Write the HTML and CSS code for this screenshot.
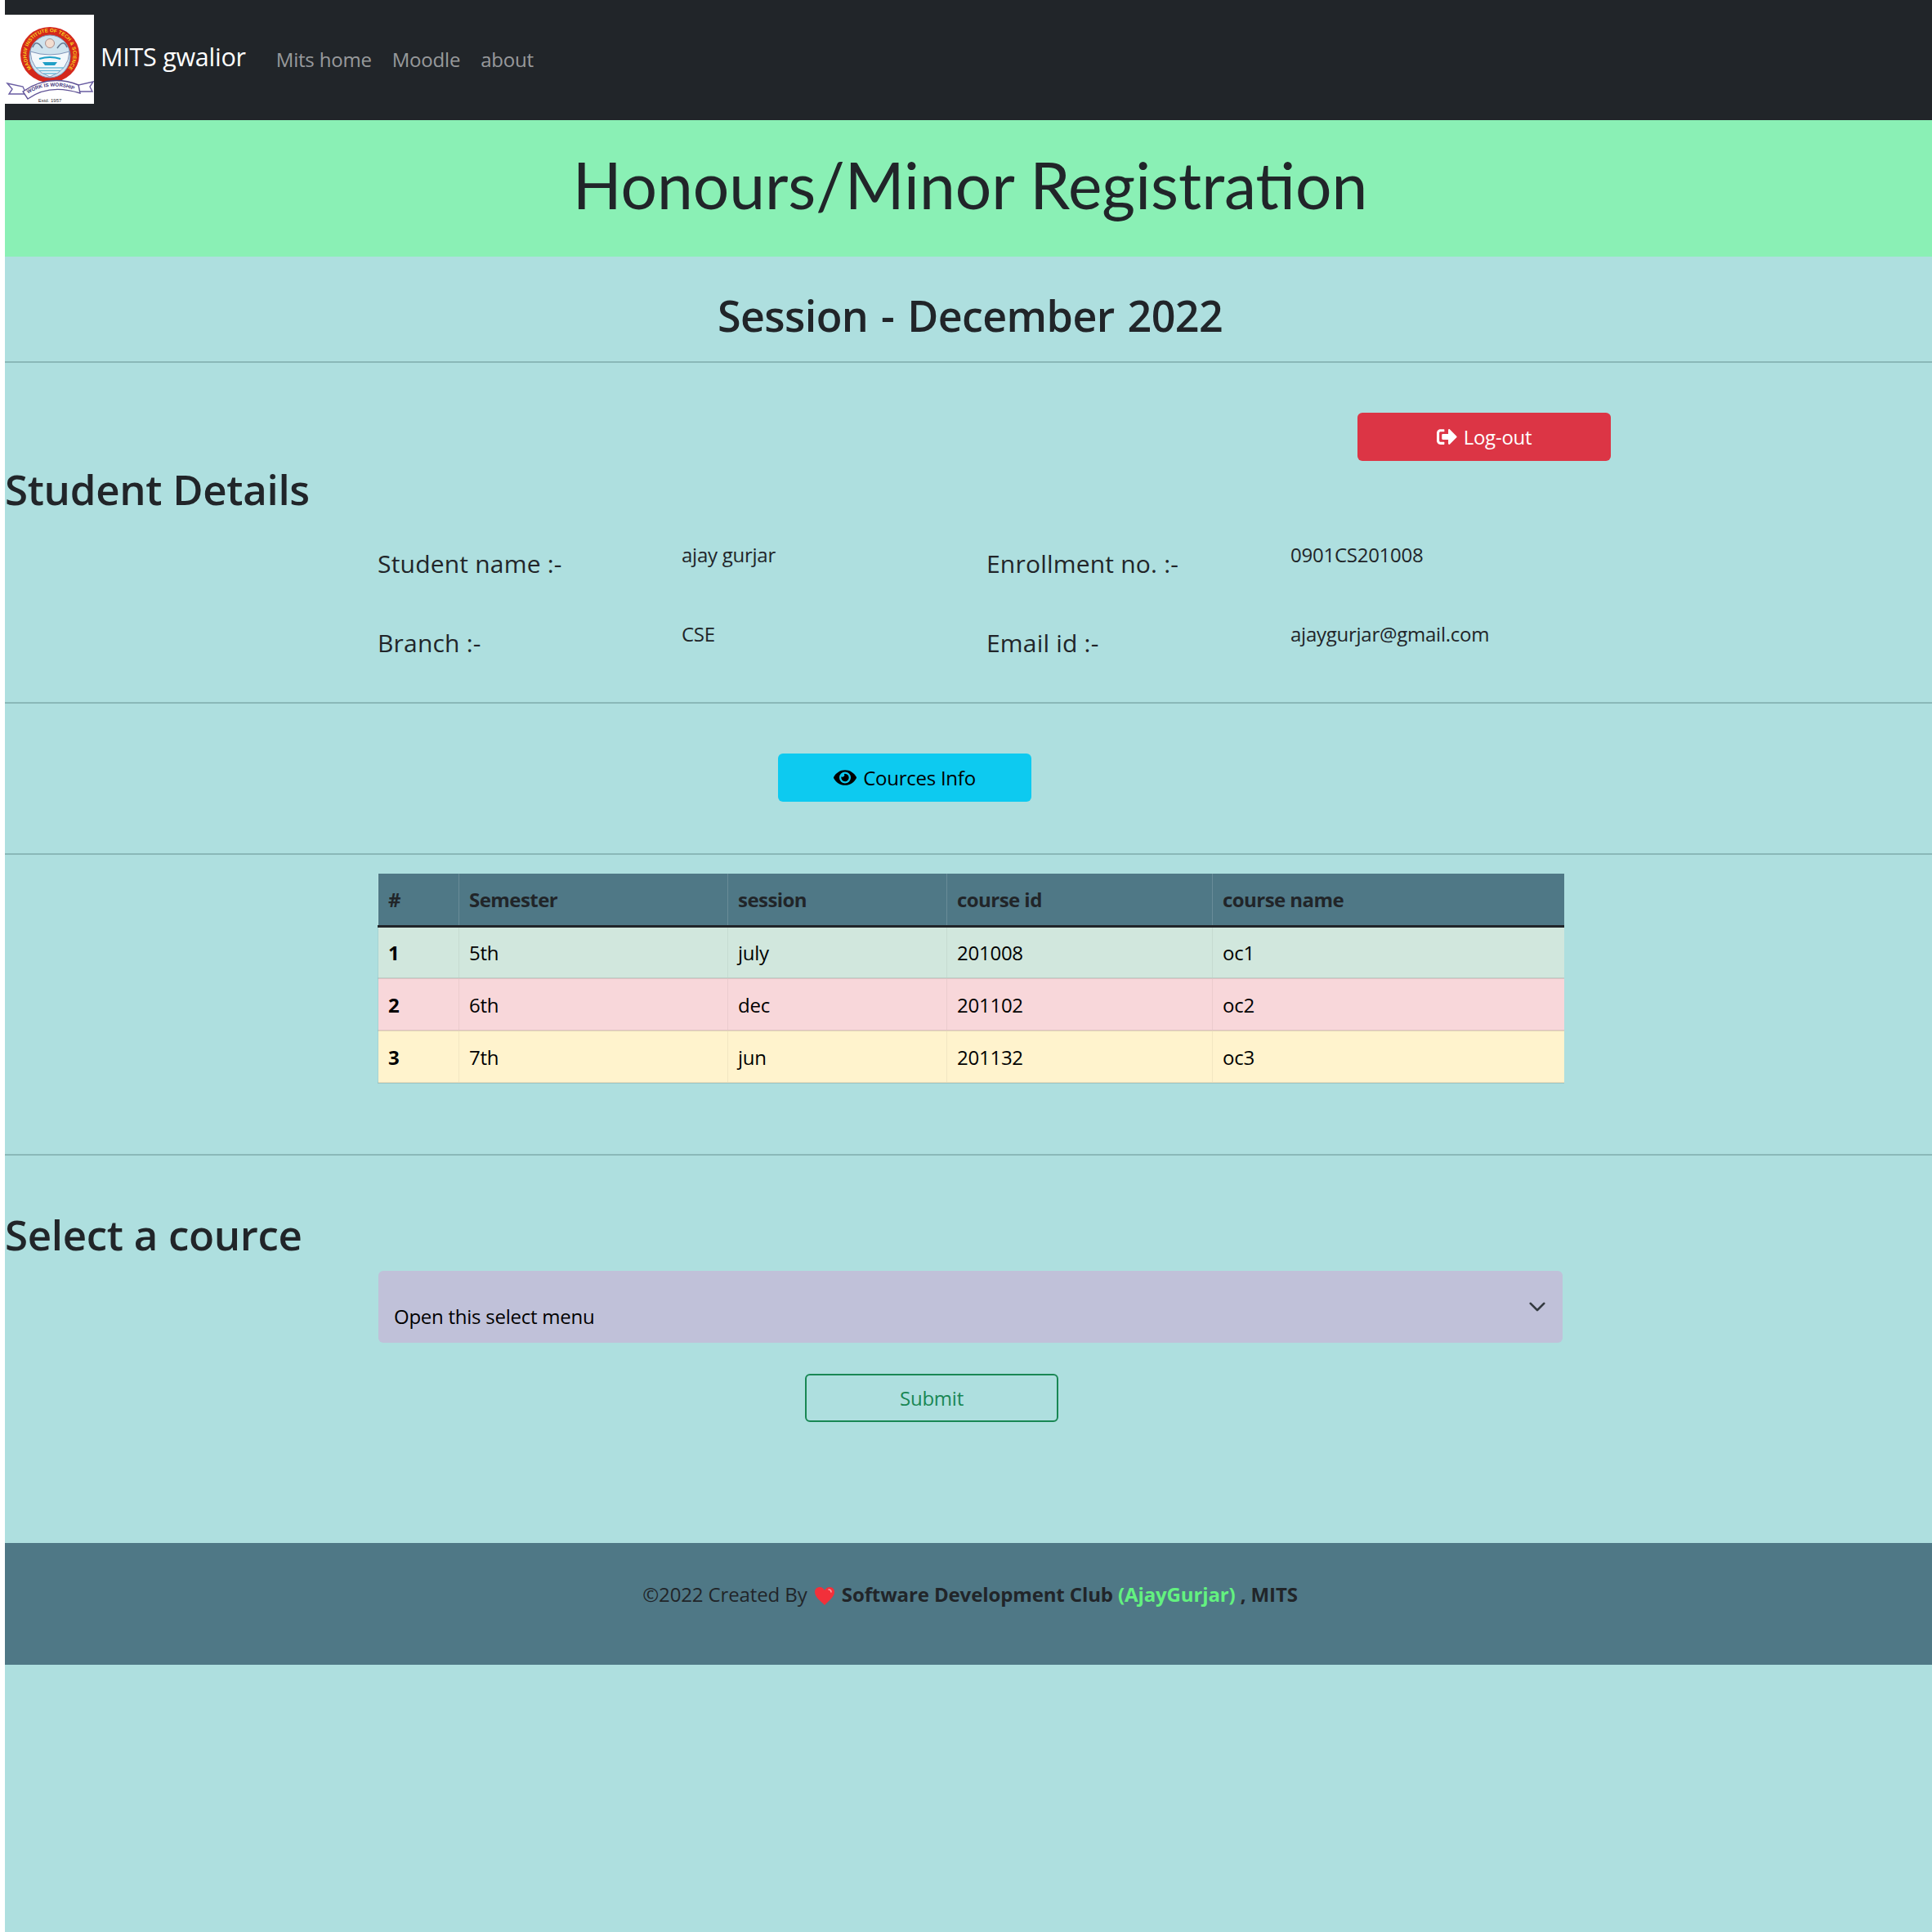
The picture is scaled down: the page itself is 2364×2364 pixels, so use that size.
FILE: index.html
```html
<!DOCTYPE html>
<html lang="en">
<head>
<meta charset="utf-8">
<title>Honours/Minor Registration</title>
<link rel="stylesheet" href="styles.css">
</head>
<body>
<nav class="navbar">
  <a class="brand" href="#">
    <svg class="logo" viewBox="0 0 109 109" xmlns="http://www.w3.org/2000/svg">
      <rect width="109" height="109" fill="#fff"/>
      <defs>
        <path id="arc" d="M37 70 A28.5 27.5 0 1 1 73 70"/>
        <path id="motto" d="M26 98 Q54 80 87 93"/>
      </defs>
      <ellipse cx="55" cy="49" rx="36" ry="34" fill="#d4281c"/>
      <text class="logo-arc"><textPath href="#arc" startOffset="50%" text-anchor="middle">MADHAV INSTITUTE OF TECH &amp; SCIENCE</textPath></text>
      <ellipse cx="55" cy="51" rx="25" ry="26" fill="#cfe3ee" stroke="#7d97b8" stroke-width="1"/>
      <path d="M31 45 Q55 53 79 45 Q78 68 55 76 Q32 68 31 45Z" fill="#f3f8fb" stroke="#6b7fa8" stroke-width=".8"/>
      <circle cx="55" cy="35" r="5.5" fill="#f2ddd0" stroke="#9c7a78" stroke-width=".8"/>
      <path d="M46 41 Q38 29 34 40 M64 41 Q72 29 76 40" fill="none" stroke="#667a92" stroke-width="1.5"/>
      <path d="M42 54 Q55 50 68 54" fill="none" stroke="#1f9fc6" stroke-width="2.2"/>
      <path d="M46 58 H64 L61 62 H49Z" fill="#1f9fc6"/>
      <path d="M38 65 H72 M42 68.5 H68 M47 72 H63" stroke="#6cb9d8" stroke-width="1.3"/>
      <path d="M3 84 L22 88 L26 97 L5 97 L9 91Z M108 82 L90 86 L88 94 L107 94 L104 88Z" fill="#fff" stroke="#6a5ea3" stroke-width="1.4"/>
      <path d="M22 94 Q54 72 90 86 L92 96 Q54 84 28 103Z" fill="#fff" stroke="#5f5296" stroke-width="1.4"/>
      <text class="logo-motto"><textPath href="#motto" startOffset="50%" text-anchor="middle">WORK IS WORSHIP</textPath></text>
      <text class="logo-estd" x="55" y="107" text-anchor="middle">Estd. 1957</text>
    </svg>
    <span class="brand-name">MITS gwalior</span>
  </a>
  <ul class="nav-links">
    <li><a href="#">Mits home</a></li>
    <li><a href="#">Moodle</a></li>
    <li><a href="#">about</a></li>
  </ul>
</nav>

<header class="banner"><h1>Honours/Minor Registration</h1></header>

<section class="session"><h2>Session - December 2022</h2></section>
<hr class="rule">

<section class="details">
  <div class="logout-row">
    <a class="btn btn-danger" href="#">
      <svg class="icon icon-out" viewBox="0 0 512 512"><path d="M497 273L329 441c-15 15-41 4.5-41-17v-96H152c-13.3 0-24-10.7-24-24v-96c0-13.3 10.7-24 24-24h136V88c0-21.4 25.9-32 41-17l168 168c9.3 9.4 9.3 24.6 0 34zM192 436v-40c0-6.6-5.4-12-12-12H96c-17.7 0-32-14.3-32-32V160c0-17.7 14.3-32 32-32h84c6.6 0 12-5.4 12-12V76c0-6.6-5.4-12-12-12H96c-53 0-96 43-96 96v192c0 53 43 96 96 96h84c6.6 0 12-5.4 12-12z"/></svg>
      Log-out
    </a>
  </div>
  <h2 class="section-title title-student">Student Details</h2>
  <div class="info-grid">
    <div class="label">Student name :-</div><div class="value">ajay gurjar</div>
    <div class="label">Enrollment no. :-</div><div class="value">0901CS201008</div>
    <div class="label">Branch :-</div><div class="value">CSE</div>
    <div class="label">Email id :-</div><div class="value">ajaygurjar@gmail.com</div>
  </div>
</section>
<hr class="rule">

<section class="info-action">
  <a class="btn btn-info" href="#">
    <svg class="icon icon-eye" viewBox="0 0 576 512"><path d="M572.52 241.4C518.29 135.59 410.93 64 288 64S57.68 135.64 3.48 241.41a32.35 32.35 0 0 0 0 29.19C57.71 376.41 165.07 448 288 448s230.32-71.64 284.52-177.41a32.35 32.35 0 0 0 0-29.19zM288 400a144 144 0 1 1 144-144 143.93 143.93 0 0 1-144 144zm0-240a95.31 95.31 0 0 0-25.31 3.79 47.85 47.85 0 0 1-66.9 66.9A95.78 95.78 0 1 0 288 160z"/></svg>
    Cources Info
  </a>
</section>
<hr class="rule">

<section class="courses">
  <table class="course-table">
    <colgroup><col class="c1"><col class="c2"><col class="c3"><col class="c4"><col class="c5"></colgroup>
    <thead>
      <tr><th>#</th><th>Semester</th><th>session</th><th>course id</th><th>course name</th></tr>
    </thead>
    <tbody>
      <tr class="row-success"><th>1</th><td>5th</td><td>july</td><td>201008</td><td>oc1</td></tr>
      <tr class="row-danger"><th>2</th><td>6th</td><td>dec</td><td>201102</td><td>oc2</td></tr>
      <tr class="row-warning"><th>3</th><td>7th</td><td>jun</td><td>201132</td><td>oc3</td></tr>
    </tbody>
  </table>
</section>
<hr class="rule">

<section class="choose">
  <h2 class="section-title title-select">Select a cource</h2>
  <div class="select-wrap">
    <select class="course-select">
      <option>Open this select menu</option>
      <option>oc1</option>
      <option>oc2</option>
      <option>oc3</option>
    </select>
    <svg class="chevron" viewBox="0 0 16 16"><path d="M2 5l6 6 6-6" fill="none" stroke="#343a40" stroke-width="2" stroke-linecap="round" stroke-linejoin="round"/></svg>
  </div>
  <div class="submit-row"><button class="btn btn-outline" type="button">Submit</button></div>
</section>

<footer class="footer">
  <p>©2022 Created By
    <svg class="heart" viewBox="0 0 26 24"><path d="M13 23C8 18 1 13 1 7c0-4 3-6 6-6 3 0 5 2 6 4 1-2 3-4 6-4 3 0 6 2 6 6 0 6-7 11-12 16z" fill="#f2303a"/><path d="M18 4c2 0 3 1 3 3" fill="none" stroke="#ff9aa0" stroke-width="1.6" stroke-linecap="round"/></svg>
    <strong>Software Development Club <span class="club">(AjayGurjar)</span> , MITS</strong></p>
</footer>
</body>
</html>
```
FILE: styles.css
```css
* { box-sizing: border-box; }
html { background: #fff; }
body {
  margin: 0 0 0 6px;
  min-height: 2364px;
  background: #aedfdf;
  color: #212529;
  font-family: "Open Sans", "Noto Sans", sans-serif;
  font-size: 24px;
  letter-spacing: -0.25px;
}
a { text-decoration: none; }
h1, h2, p { margin: 0; }

.navbar {
  display: flex;
  align-items: center;
  height: 147px;
  background: #212529;
  padding-bottom: 2px;
}
.brand { display: flex; align-items: center; color: #fff; }
.logo { width: 109px; height: 109px; display: block; }
.logo-arc { font: 700 6.2px "Liberation Sans", sans-serif; fill: #f8d21c; letter-spacing: 0; }
.logo-motto { font: 700 6.2px "Liberation Sans", sans-serif; fill: #3f3680; letter-spacing: 0; }
.logo-estd { font: 400 6px "Liberation Sans", sans-serif; fill: #333; letter-spacing: 0; }
.brand-name { margin-left: 8px; font-size: 30.5px; margin-top: -7px; }
.nav-links { display: flex; gap: 25px; list-style: none; margin: 0 0 0 37px; padding: 0; letter-spacing: -0.2px; }
.nav-links a { color: rgba(255, 255, 255, .55); }

.banner {
  height: 167px;
  background: #8af0b5;
  display: flex;
  justify-content: center;
  align-items: center;
  padding-left: 4px;
}
.banner h1 {
  font-family: "Lato", sans-serif;
  font-weight: 400;
  font-size: 78.5px;
  letter-spacing: 0;
  padding-bottom: 10px;
}

.session { height: 128px; padding: 43px 0 0 4px; text-align: center; }
.session h2 { font-size: 52px; font-weight: 600; line-height: 58px; letter-spacing: -0.6px; word-spacing: 3px; }

.rule { margin: 0; border: 0; height: 2px; background: #8ab8b8; }

.details { height: 415px; padding-top: 61px; }
.logout-row { padding-left: 1655px; }
.btn {
  display: inline-flex;
  align-items: center;
  justify-content: center;
  gap: 8px;
  width: 310px;
  height: 59px;
  border-radius: 6px;
  font-family: inherit;
  font-size: 24px;
  letter-spacing: -0.25px;
}
.btn-danger { background: #dc3545; color: #fff; }
.btn-info { background: #0dcaf0; color: #000; }
.btn-outline { background: transparent; color: #198754; border: 2px solid #198754; padding-bottom: 2px; }
.icon { fill: currentColor; display: block; }
.icon-out { width: 25px; height: 25px; }
.icon-eye { width: 28px; height: 25px; }

.section-title { font-size: 51px; font-weight: 600; line-height: 58px; letter-spacing: -0.3px; }
.title-student { margin-top: 5px; }

.info-grid {
  display: grid;
  grid-template-columns: 372px 373px 372px 340px;
  grid-auto-rows: 97px;
  margin: 15px 0 0 456px;
}
.label { font-size: 30px; padding-top: 28px; line-height: 40px; letter-spacing: 0.2px; }
.value { line-height: 34px; padding-top: 20px; }

.info-action { height: 183px; padding: 61px 0 0 946px; }

.courses { height: 366px; padding: 23px 0 0 456px; }
.course-table {
  table-layout: fixed;
  border-collapse: collapse;
  width: 1451px;
}
.c1 { width: 99px; }
.c2 { width: 329px; }
.c3 { width: 268px; }
.c4 { width: 325px; }
.c5 { width: 430px; }
.course-table th, .course-table td {
  height: 64px;
  padding: 0 12px;
  text-align: left;
  border-left: 1px solid rgba(0, 0, 0, .05);
  border-bottom: 2px solid rgba(0, 0, 0, .1);
}
.course-table th { font-weight: 700; }
.course-table thead th { background: #4f7886; border-bottom: 3px solid #212529; border-left-color: rgba(255, 255, 255, .15); letter-spacing: -0.55px; }
.row-success th, .row-success td { background: #d1e7dd; color: #000; }
.row-danger th, .row-danger td { background: #f8d7da; color: #000; }
.row-warning th, .row-warning td { background: #fff3cd; color: #000; }

.choose { height: 474px; padding-top: 67px; }
.select-wrap { position: relative; width: 1449px; margin: 16px 0 0 457px; }
.course-select {
  display: block;
  width: 100%;
  height: 88px;
  padding: 23px 60px 0 19px;
  border: 0;
  border-radius: 6px;
  background: #c0c1d9;
  color: #000;
  font-family: inherit;
  font-size: 24px;
  letter-spacing: -0.25px;
  appearance: none;
}
.chevron { position: absolute; top: 33px; right: 20px; width: 22px; height: 22px; }
.submit-row { margin: 38px 0 0 979px; }

.footer {
  height: 149px;
  background: #4f7886;
  padding: 46px 0 0 4px;
  text-align: center;
  letter-spacing: -0.12px;
}
.heart { width: 26px; height: 24px; vertical-align: -5px; margin: 0 2px; }
.club { color: #63f27f; }
```
